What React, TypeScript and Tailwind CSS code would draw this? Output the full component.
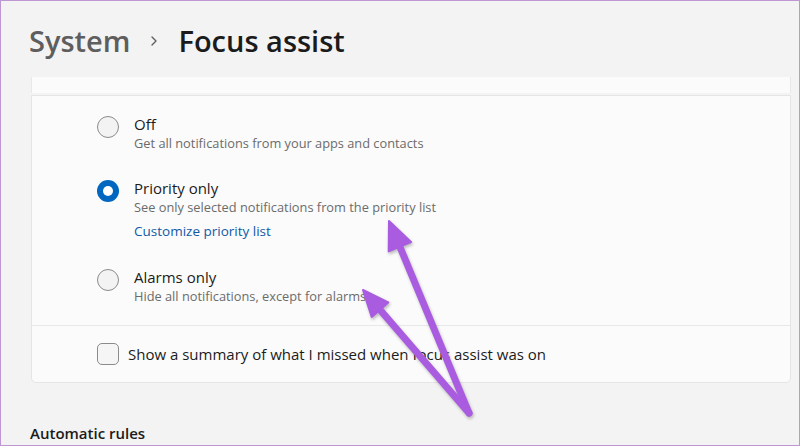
import { ChevronRight } from "lucide-react";

type RadioRowProps = {
  title: string;
  description: string;
  checked?: boolean;
  link?: string;
};

const RadioRow = (props: RadioRowProps) => {
  return (
    <div className="flex items-start gap-[15px]">
      {props.checked ? (
        <span className="mt-[2px] flex h-[22px] w-[22px] shrink-0 items-center justify-center rounded-full bg-[#0067c0]">
          <span className="h-[10px] w-[10px] rounded-full bg-white" />
        </span>
      ) : (
        <span className="mt-[2px] h-[22px] w-[22px] shrink-0 rounded-full border border-[#8b8b8b] bg-[#f3f3f3]" />
      )}
      <div className="flex flex-col">
        <p className="text-[15px] leading-[20px] text-[#1b1b1b]">{props.title}</p>
        <p className="text-[12.8px] leading-[18px] text-[#6b6b6b]">{props.description}</p>
        {props.link && (
          <p className="mt-[5px] text-[13.5px] leading-[20px] text-[#0f5aa6]">{props.link}</p>
        )}
      </div>
    </div>
  );
};

const Arrows = () => (
  <svg className="pointer-events-none absolute left-0 top-0" width="800" height="446" viewBox="0 0 800 446">
    <g style={{ filter: "drop-shadow(1px 2px 1.5px rgba(0,0,0,0.25))" }} fill="#a95ce0" stroke="#a95ce0">
      <line x1="468" y1="412" x2="399" y2="246" strokeWidth="7" strokeLinecap="round" />
      <polygon points="388,220 410,241 387.7,250.4" strokeWidth="2" strokeLinejoin="round" />
      <line x1="468" y1="412" x2="379" y2="308.7" strokeWidth="7" strokeLinecap="round" />
      <polygon points="362,289 387.3,301.5 370.7,315.9" strokeWidth="2" strokeLinejoin="round" />
    </g>
  </svg>
);

export default function App() {
  return (
    <div
      className="relative h-[446px] w-[800px] overflow-hidden border border-[#bc97d4] bg-[#f3f3f3]"
      style={{ fontFamily: '"Open Sans", "Noto Sans", sans-serif' }}
    >
      <div className="flex items-center gap-[16px] pl-[28px] pt-[20px]">
        <span className="text-[29px] leading-[40px] font-semibold text-[#5e5e5e]">System</span>
        <ChevronRight size={16} strokeWidth={2} className="text-[#5e5e5e]" />
        <span className="text-[29px] leading-[40px] font-semibold text-[#1b1b1b]">Focus assist</span>
      </div>

      <div className="ml-[30px] mt-[16px] w-[760px]">
        <div className="h-[16px] border-x border-[#e8e8e8] bg-[#fbfbfb]" />
        <div className="mt-[2px] rounded-b-[5px] border border-[#e5e5e5] bg-[#fbfbfb]">
          <div className="flex flex-col gap-[26px] pb-[20px] pl-[65px] pt-[18px]">
            <RadioRow title="Off" description="Get all notifications from your apps and contacts" />
            <RadioRow
              checked
              title="Priority only"
              description="See only selected notifications from the priority list"
              link="Customize priority list"
            />
            <RadioRow title="Alarms only" description="Hide all notifications, except for alarms" />
          </div>
          <div className="flex h-[57px] items-center gap-[9px] border-t border-[#e8e8e8] pl-[65px]">
            <span className="h-[22px] w-[22px] rounded-[5px] border border-[#8b8b8b] bg-[#f5f5f5]" />
            <span className="text-[15px] text-[#1b1b1b]">Show a summary of what I missed when focus assist was on</span>
          </div>
        </div>
      </div>

      <p className="ml-[29px] mt-[39px] text-[15px] font-semibold text-[#1b1b1b]">Automatic rules</p>

      <Arrows />
    </div>
  );
}
